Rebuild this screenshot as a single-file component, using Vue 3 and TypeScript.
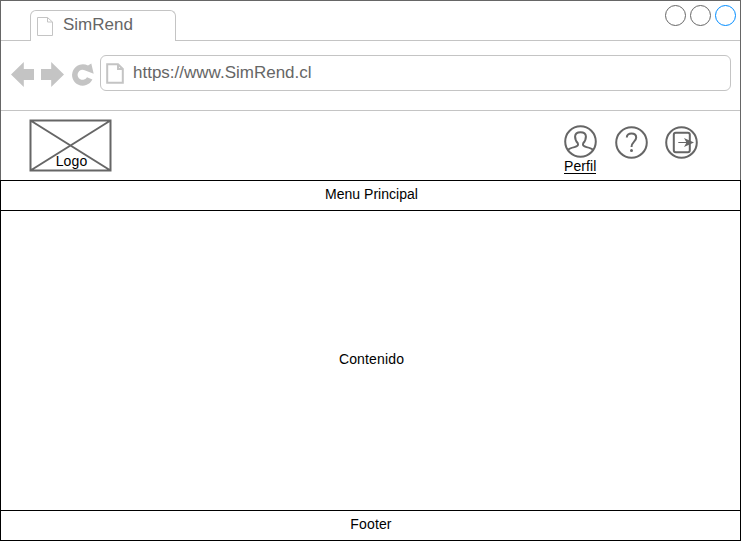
<script setup lang="ts">
interface WindowButton {
  id: string
  active: boolean
}

const title = 'SimRend'
const url = 'https://www.SimRend.cl'
const windowButtons: WindowButton[] = [
  { id: 'minimize', active: false },
  { id: 'maximize', active: false },
  { id: 'close', active: true },
]
</script>

<template>
  <div class="window">
    <div class="chrome">
      <div class="tab-bar">
        <div class="tab">
          <svg class="tab-page" width="18" height="21" viewBox="0 0 18 21">
            <path d="M1.5 1.5H11.5L16.5 6V19.5H1.5ZM11.5 1.5V6H16.5" />
          </svg>
          <span class="tab-title">{{ title }}</span>
        </div>
        <div class="window-buttons">
          <span
            v-for="button in windowButtons"
            :key="button.id"
            class="window-button"
            :class="{ active: button.active }"
          ></span>
        </div>
      </div>
      <div class="toolbar">
        <svg class="nav-icon" width="24" height="26" viewBox="0 0 24 26">
          <path d="M0 13.5L12.8 1V8H23V19H12.8V26Z" />
        </svg>
        <svg class="nav-icon forward" width="24" height="26" viewBox="0 0 24 26">
          <path d="M23 13.5L10.2 1V8H0V19H10.2V26Z" />
        </svg>
        <svg class="nav-icon reload" width="24" height="26" viewBox="0 0 24 26">
          <path
            d="M16 4.6L19.3 2.6L21.7 12.8L10 8.2L12.6 9.2A5 5 0 1 0 15 16.2L20.4 18.6A10.7 10.7 0 1 1 16 4.6Z"
          />
        </svg>
        <div class="address">
          <svg class="address-page" width="18" height="21" viewBox="0 0 18 21">
            <path d="M1.2 1.2H12L16.8 6V19.8H1.2ZM12 1.2V6H16.8" />
          </svg>
          <span>{{ url }}</span>
        </div>
      </div>
      <header class="site-header">
        <div class="logo">
          <svg width="83" height="53" viewBox="0 0 83 53">
            <path d="M1.5 1.5H81.5V51.5H1.5ZM1.5 1.5L81.5 51.5M1.5 51.5L81.5 1.5" />
          </svg>
          <span class="logo-label">Logo</span>
        </div>
        <div class="actions">
          <div class="action profile">
            <svg width="33" height="33" viewBox="0 0 33 33">
              <circle cx="16.5" cy="16.5" r="15.3" />
              <path
                d="M3.7 25C5 23.5 7.5 22.8 10.5 22.1C13.5 21.4 14.6 20.3 13.8 18.3C11.6 16 11 13.7 11.1 11.3C11.3 8.6 13.4 7.2 16.5 7.2S21.7 8.6 21.9 11.3C22 13.7 21.4 16 19.2 18.3C18.4 20.3 19.5 21.4 22.5 22.1C25.5 22.8 28 23.5 29.3 25"
              />
            </svg>
            <span class="action-label">Perfil</span>
          </div>
          <div class="action help">
            <svg width="33" height="33" viewBox="0 0 33 33">
              <circle cx="16.5" cy="16.5" r="15.3" />
              <path
                d="M11.8 11.5C11.8 8.9 13.7 7.6 16.5 7.6S21.2 9 21.2 11.6C21.2 15.5 16.5 16 16.5 21"
              />
              <circle class="solid" cx="16.5" cy="24.4" r="1.5" />
            </svg>
          </div>
          <div class="action logout">
            <svg width="33" height="33" viewBox="0 0 33 33">
              <circle cx="16.5" cy="16.5" r="15.3" />
              <rect x="8.8" y="6.8" width="16" height="19.4" rx="2" />
              <path class="thin" d="M13.3 16.5H25" />
              <path class="solid" d="M29 16.5L19 12L21.5 16.5L19 21Z" />
            </svg>
          </div>
        </div>
      </header>
    </div>
    <nav class="menu">Menu Principal</nav>
    <main class="content">Contenido</main>
    <footer class="footer">Footer</footer>
  </div>
</template>

<style>
body {
  margin: 0;
  background: #fff;
}
</style>

<style scoped>
.window {
  display: grid;
  grid-template-rows: 180px 31px 299px 31px;
  width: 741px;
  height: 541px;
  background: #fff;
  color: #000;
  font: 14px/16px "Liberation Sans", Arial, sans-serif;
}

.window * {
  box-sizing: border-box;
}

svg {
  display: block;
  flex: none;
  fill: none;
}

.chrome {
  border: 1px solid #666;
  border-bottom: 0;
}

.tab-bar {
  display: flex;
  justify-content: space-between;
  height: 40px;
  padding: 9px 4px 0 29px;
  border-bottom: 1px solid #c4c4c4;
}

.tab {
  display: flex;
  width: 146px;
  height: 31px;
  padding: 5px 0 0 5px;
  border: 1px solid #c4c4c4;
  border-bottom: 0;
  border-radius: 6px 6px 0 0;
  background: #fff;
}

.tab-page {
  stroke: #c4c4c4;
}

.tab-title {
  margin-left: 9px;
  color: #666;
  font-size: 17px;
  line-height: 18px;
}

.window-buttons {
  display: flex;
  gap: 4px;
  margin-top: -5px;
}

.window-button {
  width: 21px;
  height: 21px;
  border: 1px solid #666;
  border-radius: 50%;
}

.window-button.active {
  border-color: #008cff;
}

.toolbar {
  display: flex;
  height: 70px;
  padding: 14px 9px 0 10px;
  border-bottom: 1px solid #c4c4c4;
}

.nav-icon {
  margin-top: 6px;
  fill: #c4c4c4;
}

.forward {
  margin-left: 6px;
}

.reload {
  margin-left: 7px;
}

.address {
  display: flex;
  width: 631px;
  height: 36px;
  margin-left: 4px;
  padding: 7px 0 0 5px;
  border: 1px solid #c4c4c4;
  border-radius: 6px;
  color: #666;
  font-size: 17px;
  line-height: 19px;
}

.address-page {
  margin-right: 9px;
  stroke: #c4c4c4;
  stroke-width: 2;
}

.site-header {
  display: flex;
  justify-content: space-between;
  padding: 8px 42px 0 28px;
}

.logo {
  display: grid;
  width: 83px;
  height: 53px;
}

.logo svg,
.logo-label {
  grid-area: 1 / 1;
}

.logo svg {
  stroke: #666;
  stroke-width: 2;
}

.logo-label {
  align-self: end;
  justify-self: center;
  margin: 0 0 3px 2px;
  letter-spacing: 0.15px;
}

.actions {
  display: flex;
  align-items: flex-start;
}

.action {
  display: flex;
  flex-direction: column;
  align-items: center;
  width: 33px;
}

.action svg {
  stroke: #666;
  stroke-width: 2;
}

.action .solid {
  fill: #666;
  stroke: none;
}

.action .thin {
  stroke-width: 1;
}

.profile {
  padding-top: 6px;
}

.help {
  margin-left: 18px;
  padding-top: 7px;
}

.logout {
  margin-left: 17px;
  padding-top: 7px;
}

.action-label {
  width: 32px;
  height: 16px;
  margin-right: 1px;
  border-bottom: 1px solid #000;
  letter-spacing: 0.1px;
}

.menu,
.content,
.footer {
  display: flex;
  align-items: center;
  justify-content: center;
  border: solid #000;
}

.menu {
  border-width: 1px;
  padding: 0 0 3px 2px;
  letter-spacing: 0.03px;
}

.content {
  border-width: 0 1px;
  padding: 0 0 4px 2px;
  letter-spacing: 0.15px;
}

.footer {
  border-width: 1px;
  padding: 0 0 3px 1px;
  letter-spacing: 0.15px;
}
</style>
